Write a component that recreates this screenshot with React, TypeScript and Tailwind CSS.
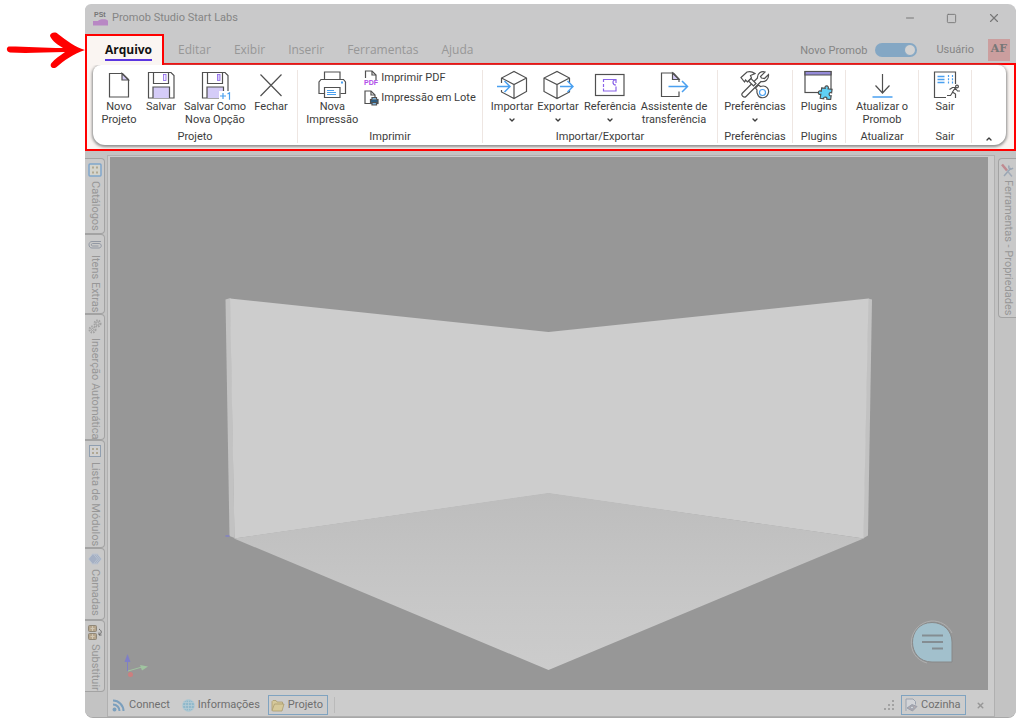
import type { ReactNode } from "react";
import { ChevronDown, ChevronUp, Minus, Square, X } from "lucide-react";

const ink = "#505050";
const blue = "#4aa0f0";
const lilac = "#d5ccf8";
const violet = "#8a63e8";

function Icon({ children }: { children: ReactNode }) {
  return (
    <svg width="32" height="30" viewBox="0 0 32 30" fill="none" stroke={ink} strokeWidth="1.200" aria-hidden="true">
      {children}
    </svg>
  );
}

const NewFileIcon = () => (
  <Icon>
    <path d="M6.500 3.500h13l6 6v17.500h-19z" fill="#fff" />
    <path d="M19 3.500v6.500h6.500z" fill={lilac} />
  </Icon>
);

const SaveIcon = ({ plus = false }: { plus?: boolean }) => (
  <Icon>
    <path d="M3.500 2.500h22.500l3 3v22.500h-25.500z" fill="#fff" />
    <path d="M8.500 2.500v11h15v-11" />
    <path d="M8 28v-11h16.500v11" fill={lilac} />
    {plus ? (
      <>
        <rect x="18.500" y="4.500" width="2.500" height="6" fill={lilac} stroke={violet} strokeWidth="0.800" />
        <rect x="20" y="21" width="12" height="9" fill="#fff" stroke="none" />
        <path d="M21 26h6M24 23v6M28.500 24l2-1.200v7" stroke={blue} />
      </>
    ) : (
      <rect x="18.500" y="4.500" width="2.500" height="6" fill="#f2eeff" stroke={violet} strokeWidth="0.800" />
    )}
  </Icon>
);

const CloseIcon = () => (
  <Icon>
    <path d="M5.500 4.500l21 21.500M26.500 4.500l-21 21.500" />
  </Icon>
);

const PrinterIcon = () => (
  <Icon>
    <path d="M8.500 9.500v-7.500h15.500v7.500" fill="#fff" />
    <path d="M8 23.500h-5v-11.500l2-2.500h22.500l2 2.500v11.500h-5" />
    <path d="M8.500 17.500h15.500v10h-15.500z" fill="#fff" />
    <path d="M11 20.500h7M11 22.500h9M11 24.500h9" stroke={blue} />
    <path d="M25 12.500h2" stroke={blue} strokeWidth="2" />
  </Icon>
);

const CubeIcon = ({ out = false }: { out?: boolean }) => (
  <Icon>
    {out ? (
      <>
        <path d="M27.500 13v-5l-12.500-6.500-13 6.500v13.500l13 7 12.500-6.500v-2M2 8l13 6.500 12.500-6.500M15 14.500v14" />
        <path d="M18 16.500h12.500M25.500 11l5.500 5.500-5.500 5.500" stroke={blue} strokeWidth="1.500" />
      </>
    ) : (
      <>
        <path d="M5.500 13v-5l12.500-6.500 12.500 6.500v13.500l-12.500 7-12.500-6.500v-2M5.500 8l12.500 6.500 12.500-6.500M18 14.500v14" />
        <path d="M1 16.500h12.500M8.500 11l5.500 5.500-5.500 5.500" stroke={blue} strokeWidth="1.500" />
      </>
    )}
  </Icon>
);

const ReferenceIcon = () => (
  <Icon>
    <rect x="1.500" y="4.500" width="28.500" height="21" />
    <path d="M9.500 12v-2.500h12.500v3.500M22 16.500v4.500h-12.500v-2.500M9.500 14v3" stroke={violet} />
    <path d="M22 10c-4-1-4 5 0 5" stroke={violet} />
  </Icon>
);

const TransferIcon = () => (
  <Icon>
    <path d="M21 12v-3l-5.500-6h-12v23.500h17.500v-5" />
    <path d="M14.500 3v6.500h6.500z" fill={lilac} />
    <path d="M10.500 16.500h18.500M24 11l5.500 5.500-5.500 5.500" stroke={blue} strokeWidth="1.500" />
  </Icon>
);

const ToolsIcon = () => (
  <Icon>
    <path d="M21.500 6.500l4.500-4.500c-3.500-1-8 1-7.500 6l-15 15c-2 2 1.500 5.500 3.500 3.500l15-15c4 1 8-2 7.500-7l-4 4-3-.5z" fill="#fff" />
    <path d="M2 7.500l6-5.500c3-1 6 0 8 1.500l-4.500 2 1 2.500-4 4-2-2-1 2z" fill="#fff" />
    <path d="M9.500 11l2.500-2.500 5 5-2.500 2.500z" fill="#fff" />
    <path d="M16.500 18l3-3 2 1.500c6-2 9.500 3 7.500 7.500-2 5-9 5-10.500 0-1-2-.5-3-.5-4z" fill="#fff" />
    <circle cx="23.500" cy="22.500" r="3" stroke={blue} />
  </Icon>
);

const PluginIcon = () => (
  <Icon>
    <rect x="2" y="1.500" width="26" height="21" fill="#fff" />
    <path d="M2 1.500h26v3.500h-26z" fill="#958bd8" />
    <path
      d="M18 18.500h3.500c-1.500-3.500 4-3.500 3 0h4v3.500c-3-1-3 4 0 3v4h-4c1-2.500-4-2.500-3 0h-3.500v-4c-3.500 1.500-3.500-4.500 0-3z"
      fill="#5fd0f5"
      transform="rotate(8 23 23)"
    />
  </Icon>
);

const UpdateIcon = () => (
  <Icon>
    <path d="M16.500 4v19M9.500 15.500l7 7.500 7-7.500" />
    <path d="M6.500 27h20" stroke={blue} strokeWidth="1.500" />
  </Icon>
);

const ExitIcon = () => (
  <Icon>
    <path d="M17 27.500h-11.500v-25.500h21v12" />
    <path d="M8.500 6.500h7M8.500 9.500h7M8.500 12.500h7" stroke={blue} strokeWidth="1.500" />
    <path d="M19.500 5v9M23.500 5v9" stroke={blue} strokeDasharray="2 1.200" />
    <circle cx="28" cy="16.500" r="1.400" />
    <path d="M20.500 19.500l3-2h3l-3 4.500 3 2v4M23.500 22.500l-2 3h-3.500M26.500 18.500l2 2.500h2.500" />
  </Icon>
);

const PdfIcon = () => (
  <svg width="15" height="16" viewBox="0 0 15 16" fill="none" stroke={ink} strokeWidth="1.200" aria-hidden="true">
    <path d="M1.500 8v-7h6.500l4 4v5" />
    <path d="M8 1v4h4" />
    <text x="0" y="15" fontSize="7" fontWeight="700" fontFamily="Liberation Sans, sans-serif" fill="#b04ee8" stroke="none">
      PDF
    </text>
  </svg>
);

const BatchIcon = () => (
  <svg width="15" height="16" viewBox="0 0 15 16" fill="none" stroke={ink} strokeWidth="1.200" aria-hidden="true">
    <path d="M6 13.500h-5v-12.500h6l4 4v3" />
    <path d="M7 1v4h4" />
    <rect x="6.500" y="9.500" width="7.500" height="4" fill="#2b5d84" />
    <path d="M8 9.500v-2h4.500v2M8 12.500h4.500v2.500h-4.500z" fill="#7fb6e0" />
  </svg>
);

function RibbonButton({ icon, lines, menu = false, width }: { icon: ReactNode; lines: string[]; menu?: boolean; width: string }) {
  return (
    <button type="button" className={`flex shrink-0 flex-col items-center whitespace-nowrap leading-[13px] ${width}`}>
      {icon}
      {lines.map((line) => (
        <span key={line}>{line}</span>
      ))}
      {menu && <ChevronDown size={8} strokeWidth={4} className="mt-[3px]" />}
    </button>
  );
}

function Group({ label, width, children }: { label: string; width: string; children: ReactNode }) {
  return (
    <section aria-label={label} className={`flex shrink-0 flex-col border-r border-[#eee6e2] ${width}`}>
      <div className="flex h-15 items-start justify-center">{children}</div>
      <span className="text-center leading-[13px]">{label}</span>
    </section>
  );
}

function Ribbon() {
  return (
    <div className="h-22 border-2 border-[#ff0000] bg-[#faf5f2] pr-2 pl-1.5">
      <div className="flex h-20 rounded-xl rounded-t-lg bg-white pt-[5px] pb-0.5 text-[11px] text-[#3c3c3c] shadow-[0_1px_3px_1px_#8c8c8c]">
        <Group label="Projeto" width="w-[205px]">
          <RibbonButton icon={<NewFileIcon />} lines={["Novo", "Projeto"]} width="w-11" />
          <RibbonButton icon={<SaveIcon />} lines={["Salvar"]} width="w-10" />
          <RibbonButton icon={<SaveIcon plus />} lines={["Salvar Como", "Nova Opção"]} width="w-17" />
          <RibbonButton icon={<CloseIcon />} lines={["Fechar"]} width="w-11" />
        </Group>
        <Group label="Imprimir" width="w-[185px]">
          <RibbonButton icon={<PrinterIcon />} lines={["Nova", "Impressão"]} width="w-14" />
          <div className="flex flex-col gap-1 pl-1">
            <button type="button" className="flex h-4 items-center gap-0.5 whitespace-nowrap">
              <PdfIcon />
              Imprimir PDF
            </button>
            <button type="button" className="flex h-4 items-center gap-0.5 whitespace-nowrap">
              <BatchIcon />
              Impressão em Lote
            </button>
          </div>
        </Group>
        <Group label="Importar/Exportar" width="w-[235px]">
          <RibbonButton icon={<CubeIcon />} lines={["Importar"]} menu width="w-11" />
          <RibbonButton icon={<CubeIcon out />} lines={["Exportar"]} menu width="w-12" />
          <RibbonButton icon={<ReferenceIcon />} lines={["Referência"]} menu width="w-14" />
          <RibbonButton icon={<TransferIcon />} lines={["Assistente de", "transferência"]} width="w-18" />
        </Group>
        <Group label="Preferências" width="w-[75px]">
          <RibbonButton icon={<ToolsIcon />} lines={["Preferências"]} menu width="w-18" />
        </Group>
        <Group label="Plugins" width="w-[53px]">
          <RibbonButton icon={<PluginIcon />} lines={["Plugins"]} width="w-12" />
        </Group>
        <Group label="Atualizar" width="w-[73px]">
          <RibbonButton icon={<UpdateIcon />} lines={["Atualizar o", "Promob"]} width="w-16" />
        </Group>
        <Group label="Sair" width="w-[53px]">
          <RibbonButton icon={<ExitIcon />} lines={["Sair"]} width="w-12" />
        </Group>
        <button type="button" aria-label="Recolher" className="flex flex-1 items-end justify-center">
          <ChevronUp size={8} strokeWidth={4} />
        </button>
      </div>
    </div>
  );
}

const CatalogIcon = () => (
  <svg className="shrink-0" width="14" height="14" viewBox="0 0 14 14" aria-hidden="true">
    <rect x="1" y="1" width="12" height="12" rx="1" fill="#d4d4cc" stroke="#7fa6cc" strokeWidth="1.500" />
    <path d="M5 3.500v2M5 8.500v2M9 3.500v2M9 8.500v2" stroke="#a59b80" strokeWidth="1.500" />
  </svg>
);
const ClipIcon = () => (
  <svg className="shrink-0" width="14" height="12" viewBox="0 0 14 12" fill="none" stroke="#9298a3" aria-hidden="true">
    <path d="M13 2.500h-9c-4 0-4 6.500 0 6.500h7c3 0 3-4.500 0-4.500h-6.500c-1.500 0-1.500 2.500 0 2.500h6" />
  </svg>
);
const GearsIcon = () => (
  <svg className="shrink-0" width="14" height="15" viewBox="0 0 14 15" fill="none" stroke="#a2a2a2" aria-hidden="true">
    <circle cx="9.500" cy="4.500" r="3" strokeWidth="2" strokeDasharray="1.500 1" />
    <circle cx="9.500" cy="4.500" r="1.500" />
    <circle cx="4.500" cy="10.500" r="3" strokeWidth="2" strokeDasharray="1.500 1" />
    <circle cx="4.500" cy="10.500" r="1" />
  </svg>
);
const ListIcon = () => (
  <svg className="shrink-0" width="12" height="13" viewBox="0 0 12 13" aria-hidden="true">
    <rect x="0.500" y="0.500" width="11" height="11" fill="#d0d0d0" stroke="#909fb0" />
    <path d="M4 3v2M4 7v2M8 3v2M8 7v2" stroke="#a59b80" strokeWidth="1.500" />
  </svg>
);
const LayersIcon = () => (
  <svg className="shrink-0" width="14" height="12" viewBox="0 0 14 12" fill="#a5b0c4" stroke="#c0c8d4" strokeWidth="0.700" aria-hidden="true">
    <path d="M9 .5l4.500 5.500-4.500 5.500-4.500-5.500z" />
    <path d="M7 .5l4.500 5.500-4.500 5.500-4.500-5.500z" />
    <path d="M5 .5l4.500 5.500-4.500 5.500-4.500-5.500z" />
  </svg>
);
const ReplaceIcon = () => (
  <svg className="shrink-0" width="14" height="15" viewBox="0 0 14 15" fill="#b5a58c" stroke="#8f8778" aria-hidden="true">
    <rect x="0.500" y="0.500" width="8" height="6" rx="1" />
    <rect x="0.500" y="8.500" width="8" height="6" rx="1" />
    <path d="M2.500 3.500h4M2.500 11.500h4M4.500 1v5M4.500 9v5" stroke="#d0c6b4" />
    <path d="M11 4c3 2 3 4 0 6M11 7.500v2.500h2.500" fill="none" stroke="#666" />
  </svg>
);
const WrenchIcon = () => (
  <svg className="shrink-0" width="13" height="15" viewBox="0 0 13 15" fill="none" aria-hidden="true">
    <path d="M3 13l7-8M8 2.500c-1 4 2 4.500 4 2.500" stroke="#9aa6b4" strokeWidth="1.500" />
    <path d="M1 1.500l5 6" stroke="#c08a90" strokeWidth="2.500" />
    <path d="M6 7.500l5 6" stroke="#a2abb8" strokeWidth="1.500" />
  </svg>
);

const sideTabs = [
  { label: "Catálogos", icon: <CatalogIcon />, height: "h-[76px]" },
  { label: "Itens Extras", icon: <ClipIcon />, height: "h-[80px]" },
  { label: "Inserção Automática", icon: <GearsIcon />, height: "h-[126px]" },
  { label: "Lista de Módulos", icon: <ListIcon />, height: "h-[108px]" },
  { label: "Camadas", icon: <LayersIcon />, height: "h-[72px]" },
  { label: "Substituir", icon: <ReplaceIcon />, height: "h-[72px]" },
];

function Scene() {
  return (
    <svg className="absolute inset-0 h-full w-full" viewBox="110 157 878 533" role="img" aria-label="Ambiente 3D">
      <defs>
        <linearGradient id="floor" x1="0" y1="0" x2="0" y2="1">
          <stop offset="0" stopColor="#bdbdbd" />
          <stop offset="0.600" stopColor="#c7c7c7" />
          <stop offset="1" stopColor="#cccccc" />
        </linearGradient>
      </defs>
      <path d="M225.500 299.500l5-1.500 4 240-5-2z" fill="#c2c2c2" />
      <path d="M872 299.500l-4-1-5 240 5-3z" fill="#c2c2c2" />
      <path d="M230 298.500l318.500 33.500 320-33.500-5 240-315-45-314 45z" fill="#cdcdcd" />
      <path d="M234 538.500l314.500-45.500 315 45.500-315 131.500z" fill="url(#floor)" />
      <path d="M225.500 536h4" stroke="#8080c4" strokeWidth="1.500" />
      <path d="M127.500 671v-10" stroke="#7f7fc6" />
      <path d="M124.500 662l3-8 3 8z" fill="#7f7fc6" />
      <path d="M128 671l14-4" stroke="#a0c4a0" />
      <path d="M140 665l8 1.500-6 4z" fill="#a0c4a0" />
      <circle cx="130.500" cy="674.500" r="2.500" fill="#cc7f7f" />
    </svg>
  );
}

const ConnectIcon = () => (
  <svg width="13" height="13" viewBox="0 0 13 13" fill="none" stroke="#7b9fbd" strokeWidth="2" aria-hidden="true">
    <circle cx="2.500" cy="10.500" r="1" />
    <path d="M1 5.500c4 0 6.500 3 6.500 6.500M1 1.500c6 0 10.500 5 10.500 10.500" />
  </svg>
);
const GlobeIcon = () => (
  <svg width="13" height="13" viewBox="0 0 13 13" fill="#8fb8cb" stroke="#b6ccd4" strokeWidth="0.800" aria-hidden="true">
    <circle cx="6.500" cy="6.500" r="6" />
    <path d="M.5 6.500h12M1.500 3.500h10M1.500 9.500h10M6.500 .5v12" />
    <ellipse cx="6.500" cy="6.500" rx="3" ry="6" fill="none" />
  </svg>
);
const FolderIcon = () => (
  <svg width="14" height="13" viewBox="0 0 14 13" fill="#d6c99a" stroke="#ab9c70" strokeWidth="0.800" aria-hidden="true">
    <path d="M1 11.500v-9l1-1h3l1 1.500h5.500v3" />
    <path d="M1 11.500l2.500-6.500h9.500l-2 7h-9z" />
  </svg>
);
const RoomIcon = () => (
  <svg width="13" height="14" viewBox="0 0 13 14" fill="#d2d4d8" stroke="#949daa" strokeWidth="0.900" aria-hidden="true">
    <path d="M1 13v-12h7l2.500 2.500v3" />
    <path d="M2 10l5-3.500 5 2-4.500 4.500z" fill="#b3aaae" />
    <circle cx="7" cy="9.500" r="1.500" />
  </svg>
);

export default function App() {
  return (
    <div className="flex min-h-screen bg-white pt-1 pr-[7px] pb-[3px] font-[Roboto,'Noto_Sans',sans-serif]">
      <div className="w-[85px] shrink-0 pt-7">
        <svg width="85" height="36" viewBox="0 0 85 36" fill="#ff0000" aria-hidden="true">
          <path d="M9 14.500C6 15 6 20 10 20.500c16 1 33 0 55-.5-5 3.500-10 7-13.500 11-2.500 3 1 6.500 4.500 4.500 8-7 18-14 29-17.500-10-3-18-9-27-16-3-3-8-1-8 2 2 5 8 9 13 12-20 0-36-1.500-54-1.500z" />
        </svg>
      </div>

      <div className="flex min-w-0 flex-1 flex-col overflow-hidden rounded-lg rounded-tl-md bg-[#c9c9ca] shadow-[0_1px_0_#a8a8a8]">
        <header className="flex h-[30px] items-center pr-[15px] pb-0.5 pl-2 text-[11px] text-[#858585]">
          <svg width="15" height="15" viewBox="0 0 15 15" aria-hidden="true">
            <text x="1" y="6" fontSize="7" fontWeight="700" fontFamily="Liberation Sans, sans-serif" fill="#777">
              PSt
            </text>
            <path d="M0 10h5c1-2.500 10-2.500 10 0v4.500h-15z" fill="#b887c4" />
          </svg>
          <h1 className="flex-1 pl-1">Promob Studio Start Labs</h1>
          <div className="flex items-center gap-[30px] text-[#777]">
            <button type="button" aria-label="Minimizar">
              <Minus size={12} strokeWidth={2} />
            </button>
            <button type="button" aria-label="Maximizar">
              <Square size={11} strokeWidth={2} />
            </button>
            <button type="button" aria-label="Fechar janela">
              <X size={14} strokeWidth={2} />
            </button>
          </div>
        </header>

        <nav className="flex h-[29px] items-start pr-1.5 font-['Open_Sans','Noto_Sans',sans-serif] text-xs text-[#979797]">
          <button
            type="button"
            className="relative z-10 flex h-[31px] w-[79px] justify-center border-2 border-b-0 border-[#ff0000] bg-[#faf5f2] pt-1 pl-2 font-bold text-[#111]"
          >
            <span className="h-[21px] border-b-2 border-[#5a35e0] leading-5">Arquivo</span>
          </button>
          <div className="flex h-8 flex-1 items-center gap-[23px] pl-3.5">
            {["Editar", "Exibir", "Inserir", "Ferramentas", "Ajuda"].map((item) => (
              <button key={item} type="button">
                {item}
              </button>
            ))}
          </div>
          <div className="flex h-8 items-center font-[Roboto,'Noto_Sans',sans-serif] text-[11px] text-[#858585]">
            <label htmlFor="novo" className="pt-0.5">
              Novo Promob
            </label>
            <span className="relative ml-2 flex h-3.5 w-[42px] items-center">
              <input
                id="novo"
                type="checkbox"
                defaultChecked
                className="h-3.5 w-[42px] appearance-none rounded-full bg-[#a4a4a4] checked:bg-[#84a7c4]"
              />
              <span className="pointer-events-none absolute right-px h-3 w-3 rounded-full border border-[#84a7c4] bg-[#d2d2d2]" />
            </span>
            <span className="ml-[19px]">Usuário</span>
            <span className="ml-3.5 flex h-[22px] w-[22px] justify-center bg-[#cb9e9e] font-['DejaVu_Serif',serif] text-[11px] leading-5 font-bold text-[#777]">
              AF
            </span>
          </div>
        </nav>

        <Ribbon />

        <div className="flex flex-1 bg-[#c3c3c3] pt-1">
          <aside className="flex w-5 shrink-0 flex-col pt-[3px] text-[11px] text-[#979797]">
            {sideTabs.map((tab) => (
              <button
                key={tab.label}
                type="button"
                className={`flex flex-col items-center gap-1 rounded-r border border-l-0 border-[#a3a3a3] bg-[#c9c9c9] pt-1 ${tab.height}`}
              >
                {tab.icon}
                <span className="leading-4 whitespace-nowrap [writing-mode:vertical-rl]">{tab.label}</span>
              </button>
            ))}
          </aside>

          <main className="ml-0.5 flex min-w-0 flex-1 flex-col border border-[#b0b0b0] bg-[#cccccc] px-0.5 pt-px">
            <div className="relative mr-1 min-h-[532px] flex-1 bg-[#979797]">
              <Scene />
              <button type="button" aria-label="Chat" className="absolute right-[34px] bottom-[26px]">
                <svg width="44" height="44" viewBox="0 0 44 44" fill="none" aria-hidden="true">
                  <path d="M22 2.500c11.500 0 20 8.500 20 19.500v20h-20c-26 0-26-39.500 0-39.500z" fill="#a2c0cc" stroke="#888" />
                  <path d="M17 43c-23-6-20-39 4-42 9-.5 17 4 21 12" stroke="#b5b5b5" strokeWidth="0.800" />
                  <path d="M12 15.500h21M12 22h21M22 28.500h11" stroke="#848d92" strokeWidth="2" />
                </svg>
              </button>
            </div>
            <footer className="flex h-[26px] items-center pt-1 text-[11px] text-[#6f6f6f]">
              <button type="button" className="flex items-center gap-1 pl-0.5">
                <ConnectIcon />
                Connect
              </button>
              <button type="button" className="ml-3 flex items-center gap-[3px]">
                <GlobeIcon />
                Informações
              </button>
              <button type="button" className="ml-2 flex h-5 w-[60px] items-center gap-[3px] border border-[#7fa3c0] pl-0.5">
                <FolderIcon />
                Projeto
              </button>
              <span className="ml-1.5 h-4 flex-1 border-l border-[#bababa]" />
              <svg width="11" height="11" viewBox="0 0 11 11" fill="#a2a2a2" aria-hidden="true">
                <path d="M8 0h2v2h-2zM4 4h2v2h-2zM8 4h2v2h-2zM0 8h2v2h-2zM4 8h2v2h-2zM8 8h2v2h-2z" />
              </svg>
              <button type="button" className="ml-1.5 flex h-5 w-[65px] items-center gap-[3px] border border-[#7fa3c0] pl-[3px]">
                <RoomIcon />
                Cozinha
              </button>
              <button type="button" aria-label="Fechar ambiente" className="mr-[7px] ml-2.5 text-[#979797]">
                <X size={9} strokeWidth={4} />
              </button>
            </footer>
          </main>

          <aside className="ml-[3px] w-[18px] shrink-0 pt-[3px] text-[11px] text-[#979797]">
            <button
              type="button"
              className="flex h-40 w-full flex-col items-center gap-0.5 rounded-l border border-r-0 border-[#a3a3a3] bg-[#c9c9c9] pt-1"
            >
              <WrenchIcon />
              <span className="leading-4 whitespace-nowrap [writing-mode:vertical-rl]">Ferramentas - Propriedades</span>
            </button>
          </aside>
        </div>
      </div>
    </div>
  );
}
